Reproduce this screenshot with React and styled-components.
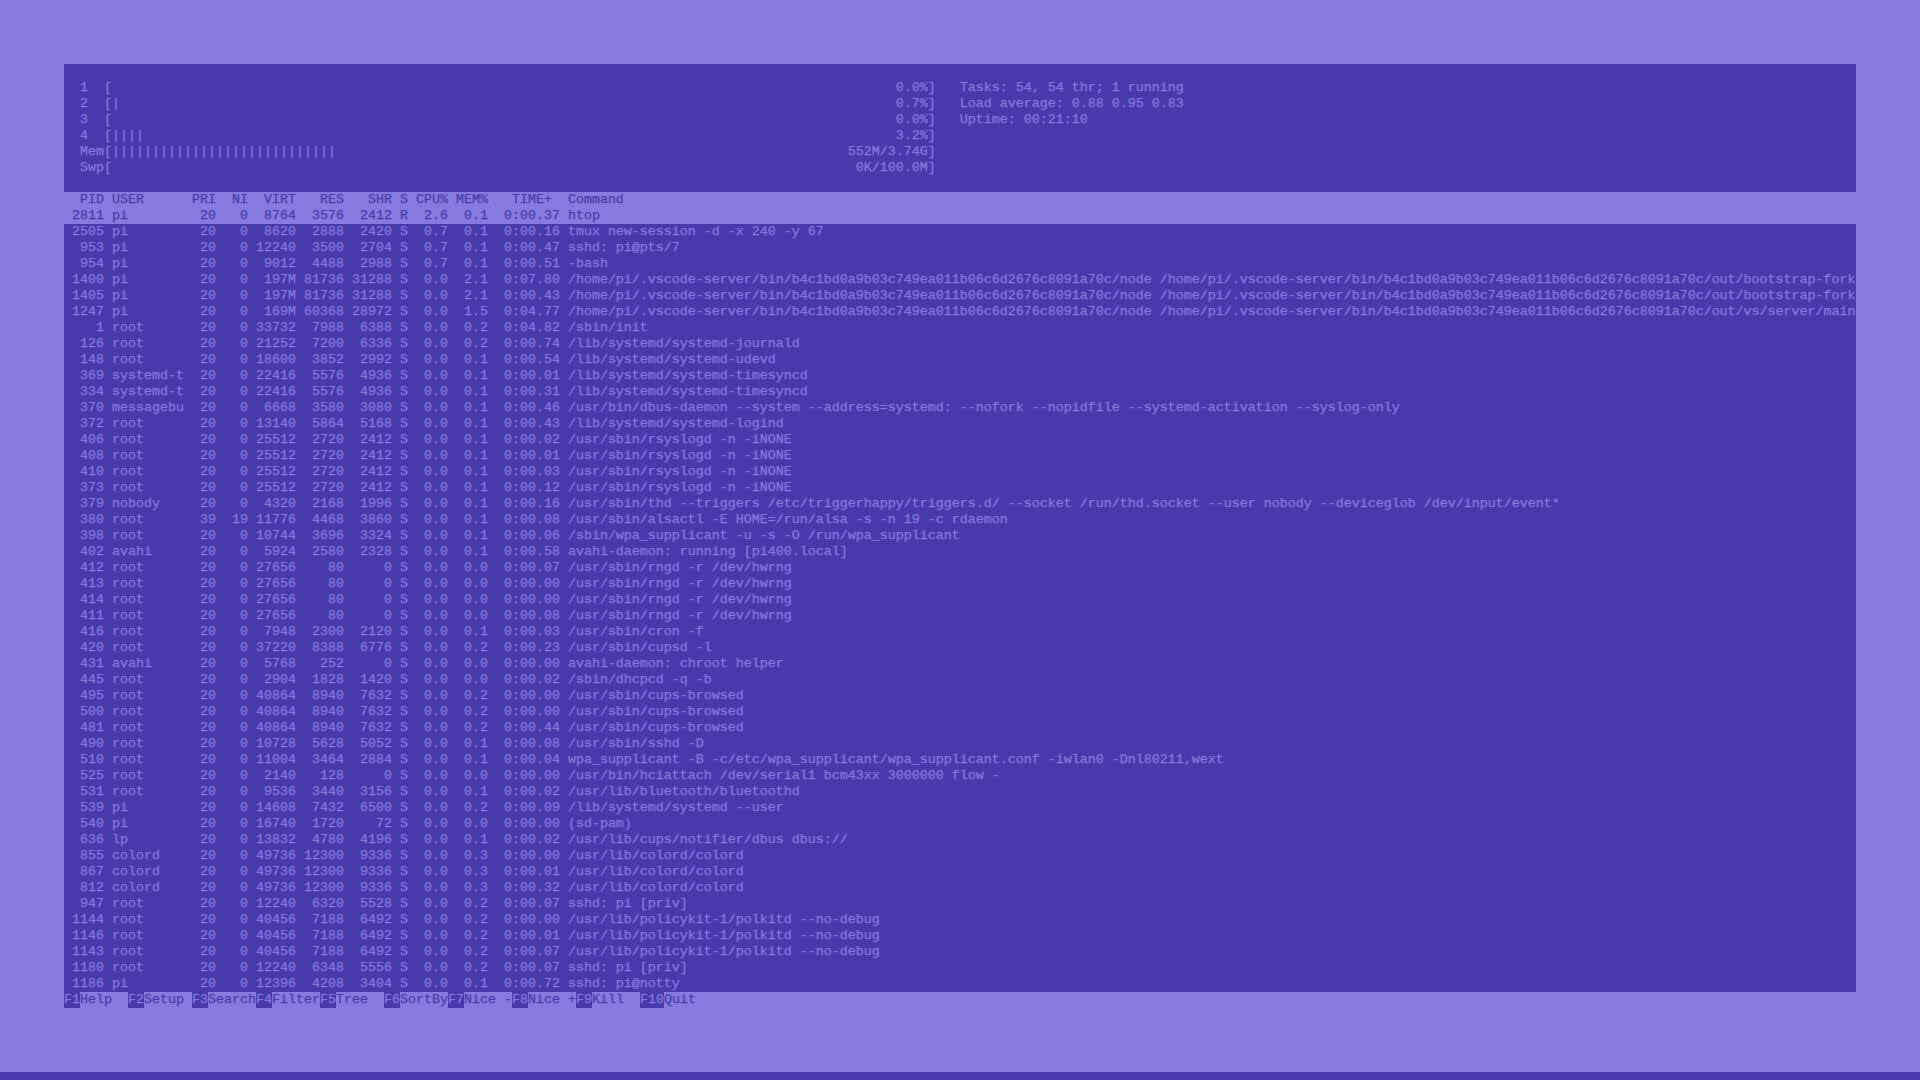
import React from "react";
import styled, { createGlobalStyle } from "styled-components";

const LIGHT = "#867ade";
const DARK = "#483aaa";

const Global = createGlobalStyle`
  html, body { margin: 0; padding: 0; background: ${LIGHT}; overflow: hidden; }
`;

const Page = styled.div`
  display: flex;
  flex-direction: column;
  width: 1920px;
  height: 1080px;
  padding-top: 64px;
  box-sizing: border-box;
  background: ${LIGHT};
  color: ${LIGHT};
  font-family: "Liberation Mono", "DejaVu Sans Mono", monospace;
  font-size: 13.3333px;
  line-height: 16px;
  -webkit-text-stroke: 0.25px currentColor;
`;

const Terminal = styled.main`
  width: 1792px;
  margin: 0 64px;
`;

const MeterPanel = styled.section`
  padding: 16px 0;
  background: ${DARK};
`;

const Line = styled.div`
  height: 16px;
  white-space: pre;
  overflow: hidden;
`;

const TableHead = styled(Line)`
  background: ${LIGHT};
  color: ${DARK};
`;

const ProcessList = styled.section`
  background: ${DARK};
`;

const ProcessRow = styled(Line)`
  background: ${(p) => (p.$selected ? LIGHT : DARK)};
  color: ${(p) => (p.$selected ? DARK : LIGHT)};
`;

const FooterBar = styled.footer`
  display: flex;
  height: 16px;
  white-space: pre;
  color: ${DARK};
`;

const FnKey = styled.span`
  background: ${DARK};
  color: ${LIGHT};
`;

const FnLabel = styled.span`
  color: ${DARK};
`;

const BottomStrip = styled.div`
  height: 8px;
  margin-top: auto;
  background: ${DARK};
`;

const RIGHT_EDGE = 109;

const meter = (label, bars, value, info = "") =>
  `  ${label}[${"|".repeat(bars)}`.padEnd(RIGHT_EDGE - value.length - 1) +
  value +
  "]" +
  (info ? "   " + info : "");

const meters = [
  meter("1  ", 0, "0.0%", "Tasks: 54, 54 thr; 1 running"),
  meter("2  ", 1, "0.7%", "Load average: 0.88 0.95 0.83"),
  meter("3  ", 0, "0.0%", "Uptime: 00:21:10"),
  meter("4  ", 4, "3.2%"),
  meter("Mem", 28, "552M/3.74G"),
  meter("Swp", 0, "0K/100.0M"),
];

const VS = "/home/pi/.vscode-server/bin/b4c1bd0a9b03c749ea011b06c6d2676c8091a70c";

const DATA = [
  [2811, "pi", 20, 0, "8764", "3576", "2412", "R", "2.6", "0.1", "0:00.37", "htop"],
  [2505, "pi", 20, 0, "8620", "2888", "2420", "S", "0.7", "0.1", "0:00.16", "tmux new-session -d -x 240 -y 67"],
  [953, "pi", 20, 0, "12240", "3500", "2704", "S", "0.7", "0.1", "0:00.47", "sshd: pi@pts/7"],
  [954, "pi", 20, 0, "9012", "4488", "2988", "S", "0.7", "0.1", "0:00.51", "-bash"],
  [1400, "pi", 20, 0, "197M", "81736", "31288", "S", "0.0", "2.1", "0:07.80", `${VS}/node ${VS}/out/bootstrap-fork`],
  [1405, "pi", 20, 0, "197M", "81736", "31288", "S", "0.0", "2.1", "0:00.43", `${VS}/node ${VS}/out/bootstrap-fork`],
  [1247, "pi", 20, 0, "169M", "60368", "28972", "S", "0.0", "1.5", "0:04.77", `${VS}/node ${VS}/out/vs/server/main`],
  [1, "root", 20, 0, "33732", "7988", "6388", "S", "0.0", "0.2", "0:04.82", "/sbin/init"],
  [126, "root", 20, 0, "21252", "7200", "6336", "S", "0.0", "0.2", "0:00.74", "/lib/systemd/systemd-journald"],
  [148, "root", 20, 0, "18600", "3852", "2992", "S", "0.0", "0.1", "0:00.54", "/lib/systemd/systemd-udevd"],
  [369, "systemd-t", 20, 0, "22416", "5576", "4936", "S", "0.0", "0.1", "0:00.01", "/lib/systemd/systemd-timesyncd"],
  [334, "systemd-t", 20, 0, "22416", "5576", "4936", "S", "0.0", "0.1", "0:00.31", "/lib/systemd/systemd-timesyncd"],
  [370, "messagebu", 20, 0, "6668", "3580", "3080", "S", "0.0", "0.1", "0:00.46", "/usr/bin/dbus-daemon --system --address=systemd: --nofork --nopidfile --systemd-activation --syslog-only"],
  [372, "root", 20, 0, "13140", "5864", "5168", "S", "0.0", "0.1", "0:00.43", "/lib/systemd/systemd-logind"],
  [406, "root", 20, 0, "25512", "2720", "2412", "S", "0.0", "0.1", "0:00.02", "/usr/sbin/rsyslogd -n -iNONE"],
  [408, "root", 20, 0, "25512", "2720", "2412", "S", "0.0", "0.1", "0:00.01", "/usr/sbin/rsyslogd -n -iNONE"],
  [410, "root", 20, 0, "25512", "2720", "2412", "S", "0.0", "0.1", "0:00.03", "/usr/sbin/rsyslogd -n -iNONE"],
  [373, "root", 20, 0, "25512", "2720", "2412", "S", "0.0", "0.1", "0:00.12", "/usr/sbin/rsyslogd -n -iNONE"],
  [379, "nobody", 20, 0, "4320", "2168", "1996", "S", "0.0", "0.1", "0:00.16", "/usr/sbin/thd --triggers /etc/triggerhappy/triggers.d/ --socket /run/thd.socket --user nobody --deviceglob /dev/input/event*"],
  [380, "root", 39, 19, "11776", "4468", "3860", "S", "0.0", "0.1", "0:00.08", "/usr/sbin/alsactl -E HOME=/run/alsa -s -n 19 -c rdaemon"],
  [398, "root", 20, 0, "10744", "3696", "3324", "S", "0.0", "0.1", "0:00.06", "/sbin/wpa_supplicant -u -s -O /run/wpa_supplicant"],
  [402, "avahi", 20, 0, "5924", "2580", "2328", "S", "0.0", "0.1", "0:00.58", "avahi-daemon: running [pi400.local]"],
  [412, "root", 20, 0, "27656", "80", "0", "S", "0.0", "0.0", "0:00.07", "/usr/sbin/rngd -r /dev/hwrng"],
  [413, "root", 20, 0, "27656", "80", "0", "S", "0.0", "0.0", "0:00.00", "/usr/sbin/rngd -r /dev/hwrng"],
  [414, "root", 20, 0, "27656", "80", "0", "S", "0.0", "0.0", "0:00.00", "/usr/sbin/rngd -r /dev/hwrng"],
  [411, "root", 20, 0, "27656", "80", "0", "S", "0.0", "0.0", "0:00.08", "/usr/sbin/rngd -r /dev/hwrng"],
  [416, "root", 20, 0, "7948", "2300", "2120", "S", "0.0", "0.1", "0:00.03", "/usr/sbin/cron -f"],
  [420, "root", 20, 0, "37220", "8388", "6776", "S", "0.0", "0.2", "0:00.23", "/usr/sbin/cupsd -l"],
  [431, "avahi", 20, 0, "5768", "252", "0", "S", "0.0", "0.0", "0:00.00", "avahi-daemon: chroot helper"],
  [445, "root", 20, 0, "2904", "1828", "1420", "S", "0.0", "0.0", "0:00.02", "/sbin/dhcpcd -q -b"],
  [495, "root", 20, 0, "40864", "8940", "7632", "S", "0.0", "0.2", "0:00.00", "/usr/sbin/cups-browsed"],
  [500, "root", 20, 0, "40864", "8940", "7632", "S", "0.0", "0.2", "0:00.00", "/usr/sbin/cups-browsed"],
  [481, "root", 20, 0, "40864", "8940", "7632", "S", "0.0", "0.2", "0:00.44", "/usr/sbin/cups-browsed"],
  [490, "root", 20, 0, "10728", "5628", "5052", "S", "0.0", "0.1", "0:00.08", "/usr/sbin/sshd -D"],
  [510, "root", 20, 0, "11004", "3464", "2884", "S", "0.0", "0.1", "0:00.04", "wpa_supplicant -B -c/etc/wpa_supplicant/wpa_supplicant.conf -iwlan0 -Dnl80211,wext"],
  [525, "root", 20, 0, "2140", "128", "0", "S", "0.0", "0.0", "0:00.00", "/usr/bin/hciattach /dev/serial1 bcm43xx 3000000 flow -"],
  [531, "root", 20, 0, "9536", "3440", "3156", "S", "0.0", "0.1", "0:00.02", "/usr/lib/bluetooth/bluetoothd"],
  [539, "pi", 20, 0, "14608", "7432", "6500", "S", "0.0", "0.2", "0:00.09", "/lib/systemd/systemd --user"],
  [540, "pi", 20, 0, "16740", "1720", "72", "S", "0.0", "0.0", "0:00.00", "(sd-pam)"],
  [636, "lp", 20, 0, "13832", "4780", "4196", "S", "0.0", "0.1", "0:00.02", "/usr/lib/cups/notifier/dbus dbus://"],
  [855, "colord", 20, 0, "49736", "12300", "9336", "S", "0.0", "0.3", "0:00.00", "/usr/lib/colord/colord"],
  [867, "colord", 20, 0, "49736", "12300", "9336", "S", "0.0", "0.3", "0:00.01", "/usr/lib/colord/colord"],
  [812, "colord", 20, 0, "49736", "12300", "9336", "S", "0.0", "0.3", "0:00.32", "/usr/lib/colord/colord"],
  [947, "root", 20, 0, "12240", "6320", "5528", "S", "0.0", "0.2", "0:00.07", "sshd: pi [priv]"],
  [1144, "root", 20, 0, "40456", "7188", "6492", "S", "0.0", "0.2", "0:00.00", "/usr/lib/policykit-1/polkitd --no-debug"],
  [1146, "root", 20, 0, "40456", "7188", "6492", "S", "0.0", "0.2", "0:00.01", "/usr/lib/policykit-1/polkitd --no-debug"],
  [1143, "root", 20, 0, "40456", "7188", "6492", "S", "0.0", "0.2", "0:00.07", "/usr/lib/policykit-1/polkitd --no-debug"],
  [1180, "root", 20, 0, "12240", "6348", "5556", "S", "0.0", "0.2", "0:00.07", "sshd: pi [priv]"],
  [1186, "pi", 20, 0, "12396", "4208", "3404", "S", "0.0", "0.1", "0:00.72", "sshd: pi@notty"],
];

const formatRow = ([pid, user, pri, ni, virt, res, shr, st, cpuv, mem, time, cmd]) =>
  [
    String(pid).padStart(5),
    user.padEnd(9),
    String(pri).padStart(3),
    String(ni).padStart(3),
    virt.padStart(5),
    res.padStart(5),
    shr.padStart(5),
    st,
    cpuv.padStart(4),
    mem.padStart(4),
    time.padStart(8),
    cmd,
  ].join(" ");

const HEADER = "  PID USER      PRI  NI  VIRT   RES   SHR S CPU% MEM%   TIME+  Command";

const KEYS = [
  ["F1", "Help  "],
  ["F2", "Setup "],
  ["F3", "Search"],
  ["F4", "Filter"],
  ["F5", "Tree  "],
  ["F6", "SortBy"],
  ["F7", "Nice -"],
  ["F8", "Nice +"],
  ["F9", "Kill  "],
  ["F10", "Quit"],
];

export default function App() {
  return (
    <Page>
      <Global />
      <Terminal>
        <MeterPanel>
          {meters.map((m, i) => (
            <Line key={i}>{m}</Line>
          ))}
        </MeterPanel>
        <TableHead>{HEADER}</TableHead>
        <ProcessList>
          {DATA.map((row, i) => (
            <ProcessRow key={row[0]} $selected={i === 0}>
              {formatRow(row)}
            </ProcessRow>
          ))}
        </ProcessList>
        <FooterBar>
          {KEYS.map(([k, l]) => (
            <React.Fragment key={k}>
              <FnKey>{k}</FnKey>
              <FnLabel>{l}</FnLabel>
            </React.Fragment>
          ))}
        </FooterBar>
      </Terminal>
      <BottomStrip />
    </Page>
  );
}
